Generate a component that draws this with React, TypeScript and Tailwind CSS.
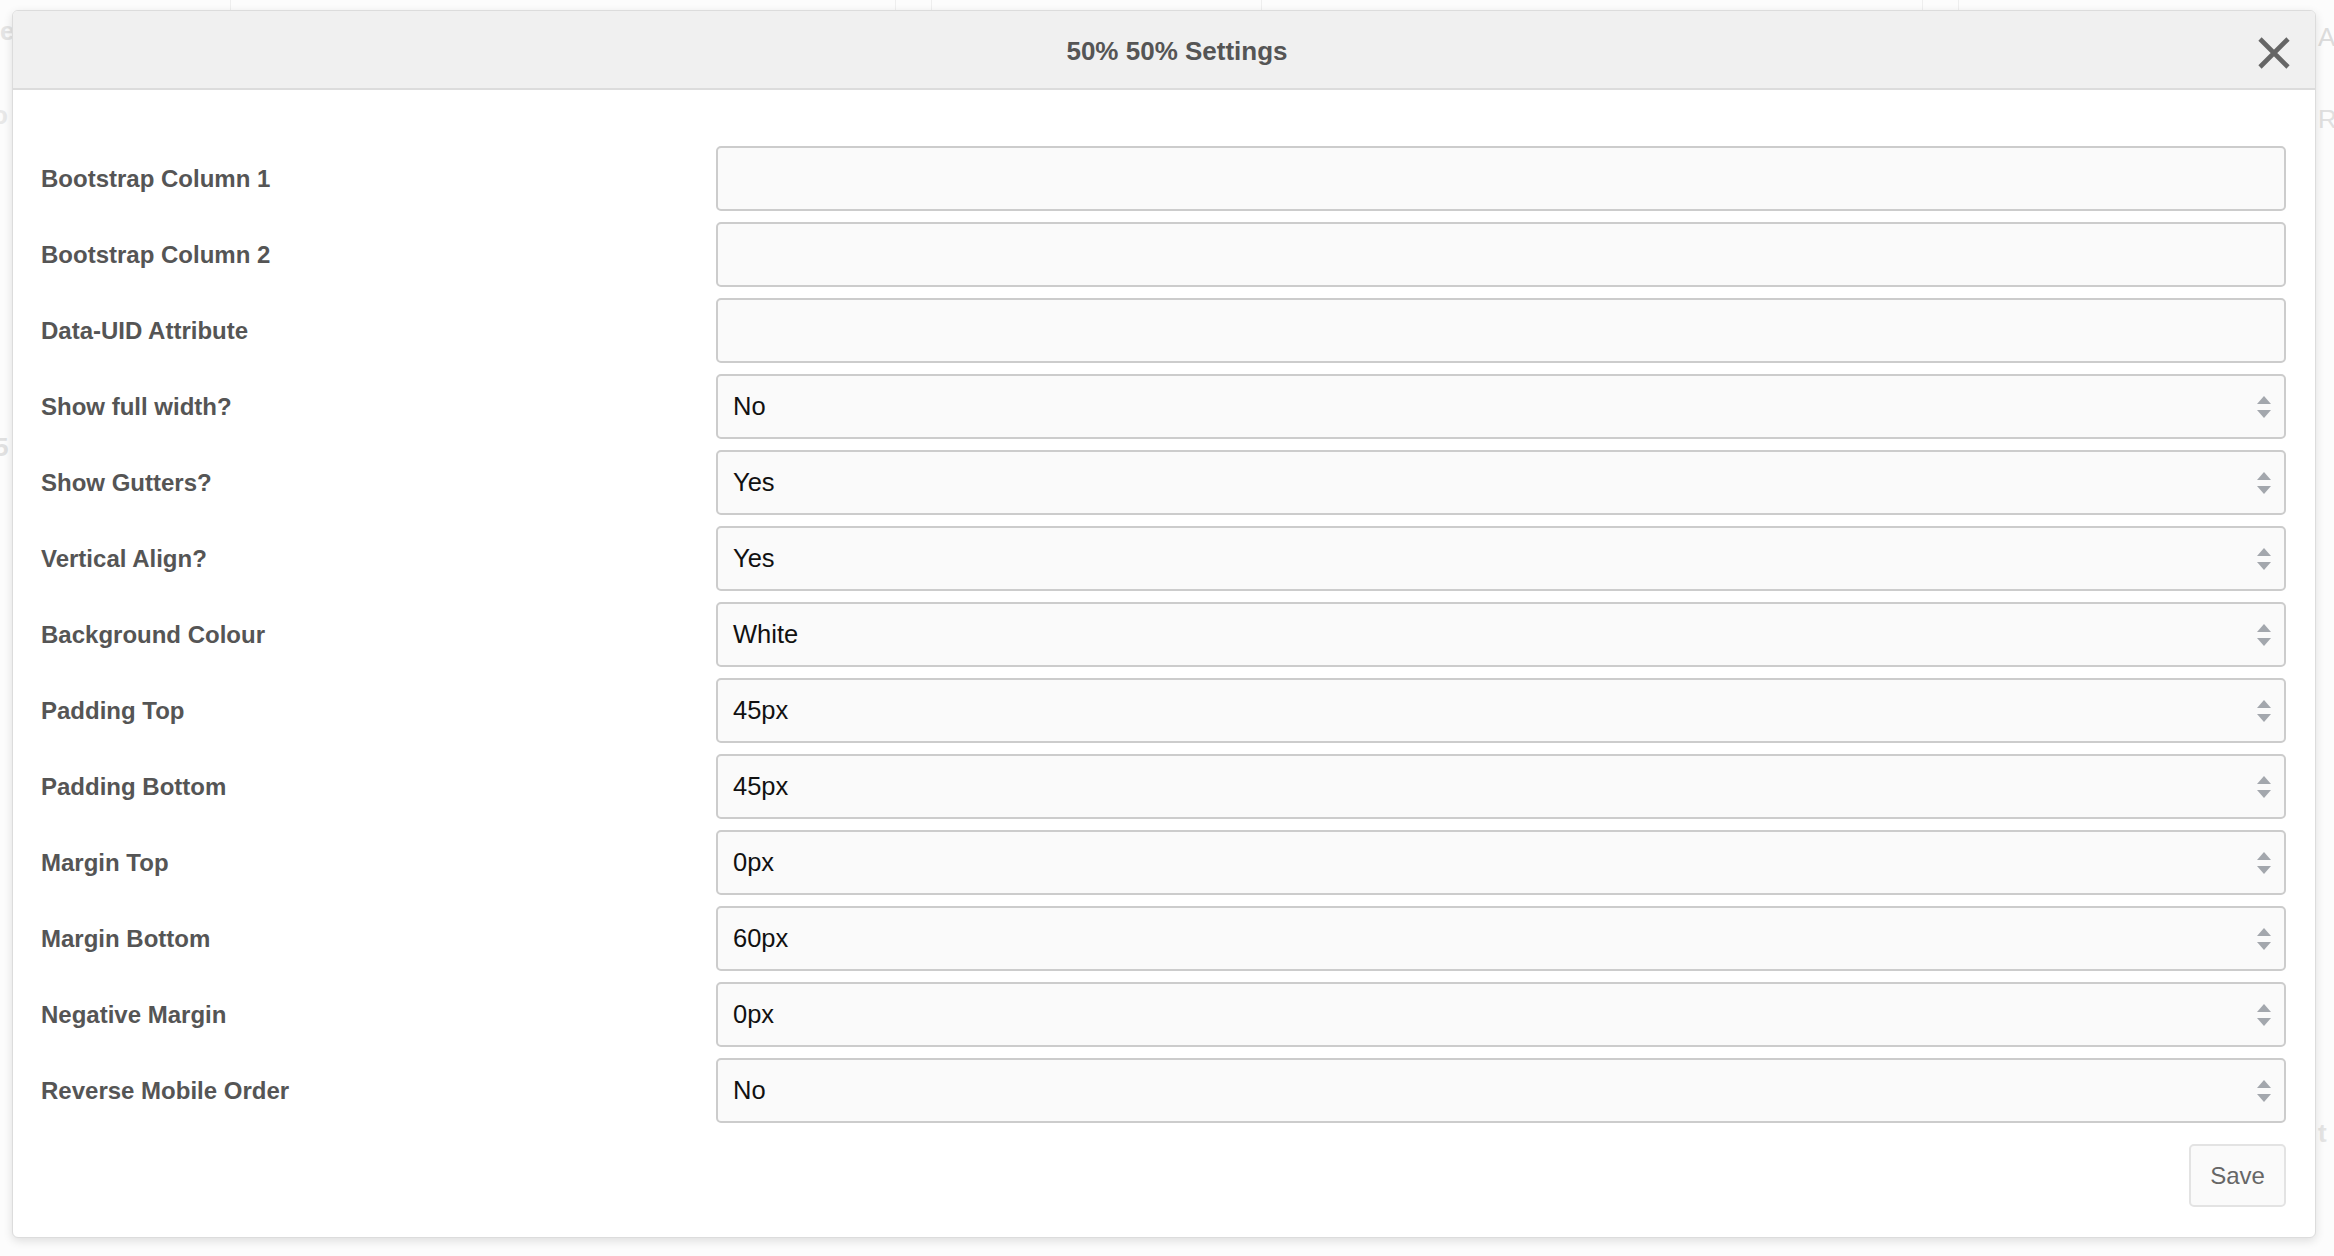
import React from "react";

const rows: { label: string; value?: string }[] = [
  { label: "Bootstrap Column 1" },
  { label: "Bootstrap Column 2" },
  { label: "Data-UID Attribute" },
  { label: "Show full width?", value: "No" },
  { label: "Show Gutters?", value: "Yes" },
  { label: "Vertical Align?", value: "Yes" },
  { label: "Background Colour", value: "White" },
  { label: "Padding Top", value: "45px" },
  { label: "Padding Bottom", value: "45px" },
  { label: "Margin Top", value: "0px" },
  { label: "Margin Bottom", value: "60px" },
  { label: "Negative Margin", value: "0px" },
  { label: "Reverse Mobile Order", value: "No" },
];

function Arrows() {
  return (
    <svg width="14" height="22" viewBox="0 0 14 22" className="shrink-0">
      <polygon points="0,8 7,0 14,8" fill="#a3a7ad" />
      <polygon points="0,14 14,14 7,22" fill="#a3a7ad" />
    </svg>
  );
}

export default function App() {
  return (
    <div
      className="relative w-[2334px] h-[1256px] overflow-hidden bg-[#fcfcfc]"
      style={{ fontFamily: '"Liberation Sans", Arial, sans-serif' }}
    >
      {/* faint underlying page */}
      <div className="absolute left-0 top-0 w-full h-[10px] flex">
        <div className="w-[231px] border-r border-[#eee]" />
        <div className="w-[665px] border-r border-[#eee]" />
        <div className="w-[36px] border-r border-[#eee]" />
        <div className="w-[330px] border-r border-[#eee]" />
        <div className="w-[661px] border-r border-[#eee]" />
        <div className="w-[36px] border-r border-[#eee]" />
      </div>
      <div className="absolute left-[0px] top-[12px] text-[26px] font-bold text-[#e4e4e4]">e</div>
      <div className="absolute left-[-8px] top-[96px] text-[26px] font-bold text-[#e8e8e8]">o</div>
      <div className="absolute left-[-6px] top-[428px] text-[26px] font-bold text-[#e0e0e0]">5</div>
      <div className="absolute left-[2318px] top-[18px] text-[26px] text-[#dcdcdc]">Alig</div>
      <div className="absolute left-[2318px] top-[100px] text-[26px] text-[#e0e0e0]">Re</div>
      <div className="absolute left-[2318px] top-[1114px] text-[26px] font-bold text-[#e4e4e4]">t</div>

      {/* modal */}
      <div className="absolute left-[12px] top-[10px] w-[2304px] bg-white rounded-[6px] border border-[#dcdcdc] shadow-[0_3px_10px_rgba(0,0,0,0.12)] overflow-hidden">
        <div className="relative h-[79px] bg-[#f0f0f0] border-b-2 border-[#dcdcdc] flex items-center justify-center pl-[26px] pt-[3px]">
          <span className="text-[26px] font-bold text-[#555]">50% 50% Settings</span>
          <button className="absolute right-[24px] top-[25px] w-[34px] h-[34px] flex items-center justify-center">
            <svg width="34" height="34" viewBox="0 0 34 34">
              <path d="M3 3 L31 31 M31 3 L3 31" stroke="#666" strokeWidth="4.6" strokeLinecap="butt" />
            </svg>
          </button>
        </div>

        <div className="pl-[28px] pr-[29px] pt-[56px] pb-[30px]">
          <div className="flex flex-col gap-[11px]">
            {rows.map((r) => (
              <div key={r.label} className="flex items-center">
                <div className="w-[675px] shrink-0 text-[24px] font-bold text-[#555]">{r.label}</div>
                <div className="flex-1 h-[65px] border-2 border-[#cccccc] rounded-[5px] bg-[#fafafa] flex items-center justify-between pl-[15px] pr-[13px]">
                  <span className="text-[25.5px] text-[#111]">{r.value ?? ""}</span>
                  {r.value !== undefined && <Arrows />}
                </div>
              </div>
            ))}
          </div>
          <div className="flex justify-end mt-[21px]">
            <button className="w-[97px] h-[63px] border-2 border-[#e3e3e3] rounded-[5px] bg-[#fafafa] text-[24px] text-[#666]">
              Save
            </button>
          </div>
        </div>
      </div>
    </div>
  );
}
